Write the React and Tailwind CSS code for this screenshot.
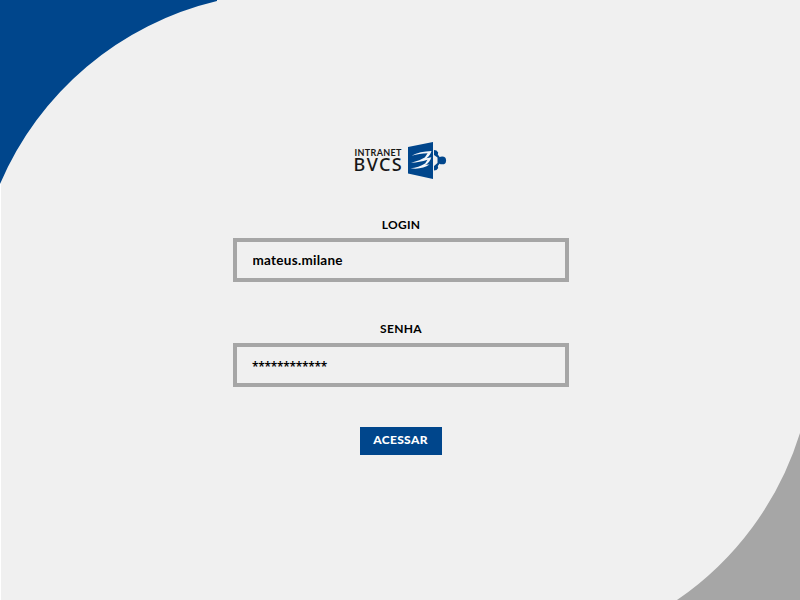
function Backdrop() {
  return (
    <svg className="pointer-events-none absolute inset-0" width="800" height="600" viewBox="0 0 800 600" aria-hidden="true">
      <path d="M0 182h1v418H0z" fill="#fff" />
      <path d="M0 0H217V1A315 315 0 0 0 0 184Z" fill="#00468c" />
      <path d="M800 433A315 315 0 0 1 677 600H800Z" fill="#a6a6a6" />
    </svg>
  );
}

function Mark() {
  return (
    <svg className="shrink-0" width="39" height="38" viewBox="0 0 39 38" aria-hidden="true">
      <path d="M0 6 25 1V38L0 32.500Z" fill="#00468c" />
      <g fill="#f4f6fa">
        <path d="M3.500 14.800C9 11.500 16 10.300 23.500 10 22.800 12.800 21 15.500 18.500 17.300L16.800 16.600 19.600 12.200C14 12.200 9 13 3.500 14.800Z" />
        <path d="M3 21.800C9 20.500 14 18.300 18 15.800L18.500 17.300 23.300 16.300C22.500 19.500 20.500 22 18 23.800L16.800 23 19.500 18.800C14 20.500 9 21.700 3 21.800Z" />
        <path d="M2.500 27.300C8 26.800 13 25 17 22.500L18 23.800 21.500 23.500C17 27 10 28.300 2.500 27.300Z" />
      </g>
      <g fill="#00468c">
        <path d="M26 9 28.500 9.500 30.200 11.500 29.800 13.500 32 16.500V22L29.800 25 30.200 27 28.500 29 26 29.500V25L29.500 22V16.500L26 14Z" />
        <circle cx="34.200" cy="19.400" r="3.900" />
      </g>
    </svg>
  );
}

function Field({ label, value, labelClass, inputClass }) {
  return (
    <label className="flex w-[336px] flex-col items-center">
      <span className={`h-[18px] text-[12px] font-bold tracking-[0.3px] ${labelClass}`}>{label}</span>
      <input
        type="text"
        defaultValue={value}
        className={`mt-1 h-11 w-full border-4 border-[#a6a6a6] bg-transparent outline-none ${inputClass}`}
      />
    </label>
  );
}

export default function App() {
  return (
    <main className="relative h-[600px] w-[800px] overflow-hidden bg-[#f0f0f0] font-['Lato','Noto_Sans',sans-serif] text-black">
      <Backdrop />
      <form className="relative flex flex-col items-center pt-[141px] pl-[2px]">
        <div className="flex h-[39px] w-[93px] items-start">
          <div className="flex w-[53px] shrink-0 flex-col pt-[7px] whitespace-nowrap text-[#171717]">
            <span className="h-[9px] text-[9px] leading-[10px] font-bold tracking-[0.35px]">INTRANET</span>
            <span className="-ml-px h-[16px] font-['Noto_Sans',sans-serif] text-[18px] leading-[14px] font-medium tracking-[1.4px]">BVCS</span>
          </div>
          <Mark />
        </div>
        <div className="mt-9 flex flex-col gap-[39px]">
          <Field label="LOGIN" value="mateus.milane" labelClass="leading-[18px]" inputClass="pl-[15.500px] text-[13.5px] font-bold tracking-[0.27px]" />
          <Field label="SENHA" value="************" labelClass="leading-[16px]" inputClass="pl-[15px] pt-0.5 font-['Noto_Sans',sans-serif] text-[12px] font-semibold tracking-[-0.3px]" />
        </div>
        <button type="button" className="mt-10 h-7 w-[82px] bg-[#00468c] pr-px pb-0.5 text-[12px] font-black tracking-[0.35px] text-white">
          ACESSAR
        </button>
      </form>
    </main>
  );
}
